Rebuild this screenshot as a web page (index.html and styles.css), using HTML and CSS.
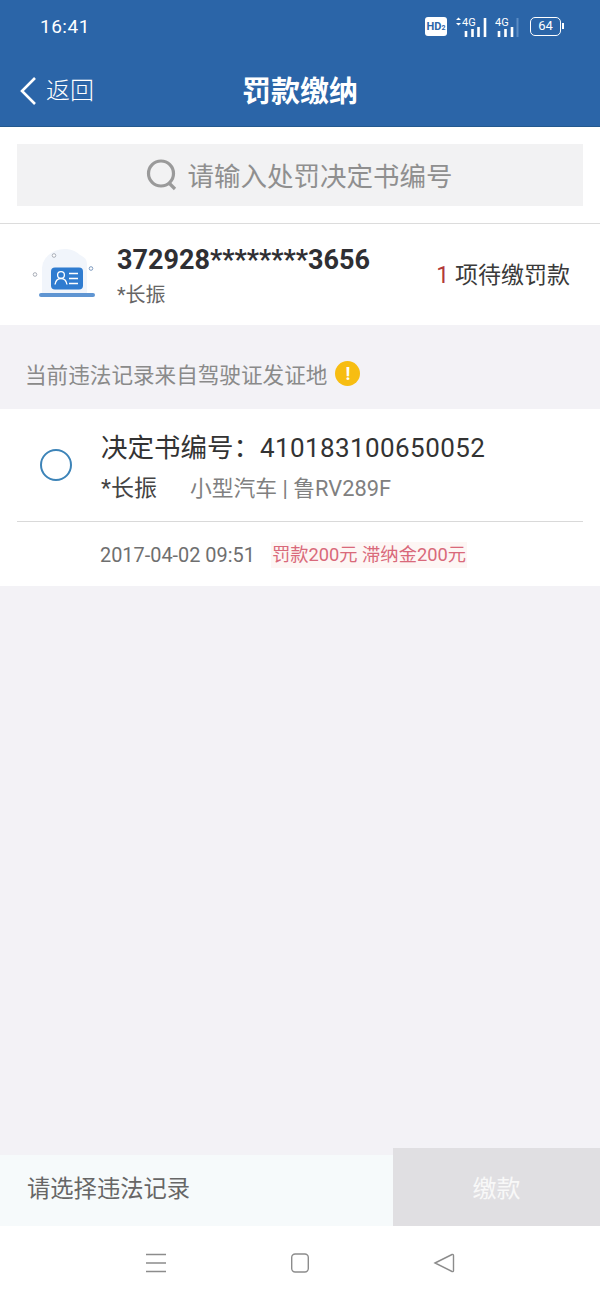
FILE: index.html
```html
<!DOCTYPE html>
<html lang="zh-CN">
<head>
    <meta charset="UTF-8">
    <meta name="viewport" content="width=device-width, initial-scale=1.0">
    <title>罚款缴纳</title>
    <link rel="stylesheet" href="styles.css">
</head>
<body>
    <div class="page">
        <header class="top">
            <div class="status-bar">
                <span class="clock">16:41</span>
                <div class="status-icons">
                    <span class="hd-badge">HD<small>2</small></span>
                    <svg class="signal" width="32" height="24" viewBox="0 0 32 24">
                        <path d="M1 5l2.500-2.500L6 5zM1 8l2.500 2.500L6 8z" fill="#fff"/>
                        <text x="7" y="11" class="signal-text">4G</text>
                        <path d="M11 16v6M17.500 14v8M23.500 12v10M30 3v19" stroke="#fff" stroke-width="2.600" fill="none"/>
                    </svg>
                    <svg class="signal" width="24" height="24" viewBox="0 0 24 24">
                        <text x="0" y="11" class="signal-text">4G</text>
                        <path d="M4 16v6M10.500 14v8M17 12v10" stroke="#fff" stroke-width="2.600" fill="none"/>
                        <path d="M22.500 3v19" stroke="#5b8cc4" stroke-width="2" fill="none"/>
                    </svg>
                    <div class="battery"><span>64</span></div>
                </div>
            </div>
            <nav class="nav-bar">
                <a class="back">
                    <svg width="18" height="30" viewBox="0 0 18 30">
                        <path d="M16 2L3 15l13 13" stroke="#fff" stroke-width="2.600" fill="none"/>
                    </svg>
                    <span>返回</span>
                </a>
                <h1>罚款缴纳</h1>
            </nav>
        </header>

        <div class="search-wrap">
            <div class="search-box">
                <svg width="34" height="34" viewBox="0 0 34 34">
                    <circle cx="16" cy="15.500" r="12.500" stroke="#9a9a9a" stroke-width="3.200" fill="none"/>
                    <path d="M24 25l6 6" stroke="#9a9a9a" stroke-width="3.200" fill="none"/>
                </svg>
                <span>请输入处罚决定书编号</span>
            </div>
        </div>

        <section class="license">
            <svg class="license-icon" width="70" height="60" viewBox="0 0 70 60">
                <path d="M16 15Q24 4 38 5q8 1 13 6 7 3 7 9v29H13V24q0-5 3-9z" fill="#f1f5fb"/>
                <circle cx="25" cy="11.500" r="1.800" fill="#fff" stroke="#a9aeb8"/>
                <circle cx="6" cy="30.500" r="1.800" fill="#fff" stroke="#a9aeb8"/>
                <circle cx="62" cy="24.500" r="1.800" fill="#fff" stroke="#7f9cc0"/>
                <rect x="22" y="23.500" width="32" height="22" rx="4" fill="#2f7cd0"/>
                <circle cx="32" cy="31" r="3.400" fill="none" stroke="#fff" stroke-width="1.300"/>
                <path d="M26 40.500q1-6 6-6t6 6M40 29.500h9M40 34.500h9M40 39.500h9" fill="none" stroke="#fff" stroke-width="1.400"/>
                <rect x="10" y="49" width="56" height="4" rx="2" fill="#5f95d2"/>
            </svg>
            <div class="license-info">
                <div class="license-no">372928********3656</div>
                <div class="license-name">*长振</div>
            </div>
            <div class="pending"><em>1</em> 项待缴罚款</div>
        </section>

        <div class="source-note">
            <span>当前违法记录来自驾驶证发证地</span>
            <i class="warn-dot">!</i>
        </div>

        <section class="record">
            <div class="record-main">
                <span class="radio"></span>
                <div>
                    <div class="record-no">决定书编号：<span>410183100650052</span></div>
                    <div class="record-sub">
                        <span class="owner">*长振</span>
                        <span class="car">小型汽车 | 鲁RV289F</span>
                    </div>
                </div>
            </div>
            <div class="record-meta">
                <span class="record-time">2017-04-02 09:51</span>
                <span class="record-fee">罚款200元 滞纳金200元</span>
            </div>
        </section>

        <div class="spacer"></div>

        <footer class="pay-bar">
            <div class="pay-hint">请选择违法记录</div>
            <button class="pay-btn">缴款</button>
        </footer>

        <div class="sys-nav">
            <svg width="22" height="20" viewBox="0 0 22 20">
                <path d="M1 1.500h20M1 10h20M1 18.500h20" stroke="#8c8c8c" stroke-width="1.400" fill="none"/>
            </svg>
            <svg width="20" height="22" viewBox="0 0 20 22">
                <rect x="1.700" y="2" width="16.600" height="18" rx="3.500" stroke="#8c8c8c" stroke-width="1.400" fill="none"/>
            </svg>
            <svg width="22" height="22" viewBox="0 0 22 22">
                <path d="M2 11L19 2.500q1.500-.5 1.500 1v15q0 1.500-1.500 1z" stroke="#8c8c8c" stroke-width="1.400" fill="none"/>
            </svg>
        </div>
    </div>
</body>
</html>
```

FILE: styles.css
```css
* {
    box-sizing: border-box;
}

body {
    margin: 0;
    font-family: Roboto, "Noto Sans CJK SC", sans-serif;
    background-color: #f3f2f6;
    color: #333;
}

.page {
    display: flex;
    flex-direction: column;
    height: 1300px;
}

/* header */
.top {
    height: 127px;
    background: #2b65a8;
    border-bottom: 1px solid #23598f;
    color: #fff;
}

.status-bar {
    display: flex;
    align-items: center;
    justify-content: space-between;
    height: 53px;
    padding: 0 39px 0 40px;
}

.clock {
    font-size: 19px;
    letter-spacing: 0.5px;
}

.status-icons {
    display: flex;
    align-items: center;
    gap: 8px;
}

.hd-badge {
    width: 22px;
    height: 19px;
    border-radius: 3px;
    background: #fff;
    color: #2b65a8;
    font-size: 11px;
    font-weight: 700;
    line-height: 19px;
    text-align: center;
    white-space: nowrap;
}

.hd-badge small {
    font-size: 7px;
}

.signal-text {
    font-family: Roboto, sans-serif;
    font-size: 11px;
    fill: #fff;
}

.battery {
    position: relative;
    width: 31px;
    height: 19px;
    margin-left: 3px;
    border: 1.500px solid #fff;
    border-radius: 5px;
    font-size: 13px;
    line-height: 16px;
    text-align: center;
}

.battery::after {
    content: "";
    position: absolute;
    top: 5px;
    right: -4px;
    width: 2px;
    height: 6px;
    background: #fff;
}

.nav-bar {
    position: relative;
    display: flex;
    align-items: center;
    justify-content: center;
    height: 73px;
    padding-top: 5px;
}

.back {
    position: absolute;
    left: 19px;
    top: 22px;
    display: flex;
    align-items: center;
    gap: 9px;
    font-size: 24px;
    line-height: 32px;
    font-weight: 300;
}

.nav-bar h1 {
    margin: 0;
    font-size: 29px;
    font-weight: 700;
    line-height: 68px;
}

/* search */
.search-wrap {
    padding: 17px 17px;
    height: 97px;
    background: #fff;
    border-bottom: 1px solid #dcdcdc;
}

.search-box {
    display: flex;
    align-items: center;
    justify-content: center;
    gap: 9px;
    height: 62px;
    padding-right: 3px;
    background: #f2f2f3;
    font-size: 26.500px;
    color: #8f8f8f;
}

.search-box span {
    margin-top: -2px;
}

/* license row */
.license {
    display: flex;
    align-items: center;
    height: 101px;
    padding: 0 30px 0 29px;
    background: #fff;
}

.license-icon {
    flex: none;
    margin-top: -2px;
}

.license-info {
    flex: 1;
    margin-left: 18px;
}

.license-no {
    font-size: 27px;
    font-weight: 700;
    line-height: 34px;
    margin-top: 2px;
    color: #2f2f33;
}

.license-name {
    font-size: 20px;
    line-height: 28px;
    margin-top: 4px;
    color: #666;
}

.pending {
    font-size: 23px;
    color: #3a3a3a;
    margin-top: -4px;
}

.pending em {
    font-style: normal;
    color: #b23a3a;
}

/* note */
.source-note {
    display: flex;
    align-items: center;
    gap: 8px;
    height: 84px;
    padding: 12px 25px 0;
    font-size: 21.600px;
    color: #8a8a8a;
}

.warn-dot {
    width: 25px;
    height: 25px;
    border-radius: 50%;
    background: #f7bd12;
    color: #fff;
    font-size: 18px;
    font-style: normal;
    font-weight: 700;
    line-height: 25px;
    text-align: center;
}

/* record card */
.record {
    background: #fff;
    height: 177px;
}

.record-main {
    display: flex;
    align-items: center;
    height: 113px;
    margin: 0 17px;
    padding: 3px 0 0 23px;
    border-bottom: 1px solid #d9d9d9;
}

.radio {
    flex: none;
    width: 32px;
    height: 32px;
    margin: -3px 29px 0 0;
    border: 2px solid #3d84b8;
    border-radius: 50%;
}

.record-no {
    font-size: 26.500px;
    line-height: 36px;
    color: #333;
}

.record-no span {
    font-size: 26px;
    letter-spacing: 0.4px;
}

.record-sub {
    display: flex;
    align-items: center;
    gap: 33px;
    margin-top: 8px;
    line-height: 30px;
}

.owner {
    font-size: 23px;
    color: #444;
}

.car {
    font-size: 21.800px;
    color: #808080;
}

.record-meta {
    display: flex;
    align-items: center;
    height: 63px;
    padding: 3px 0 0 100px;
}

.record-time {
    font-size: 19.900px;
    color: #6f6f6f;
}

.record-fee {
    margin-left: 16px;
    padding: 0 1px;
    font-size: 18.300px;
    line-height: 26px;
    background: #fdf6f4;
    color: #d9697a;
}

.spacer {
    flex: 1;
}

/* bottom pay bar */
.pay-bar {
    display: flex;
    align-items: flex-end;
    height: 78px;
}

.pay-hint {
    flex: 1;
    height: 71px;
    padding-left: 27px;
    background: #f6fafb;
    font-size: 23.300px;
    line-height: 68px;
    color: #666;
}

.pay-btn {
    width: 207px;
    height: 78px;
    padding: 0 0 2px;
    border: none;
    background: #e0dfe2;
    color: #f8f8f8;
    font-family: inherit;
    font-size: 24px;
}

.sys-nav {
    display: flex;
    align-items: center;
    justify-content: center;
    gap: 123px;
    height: 74px;
    background: #fff;
}
```
